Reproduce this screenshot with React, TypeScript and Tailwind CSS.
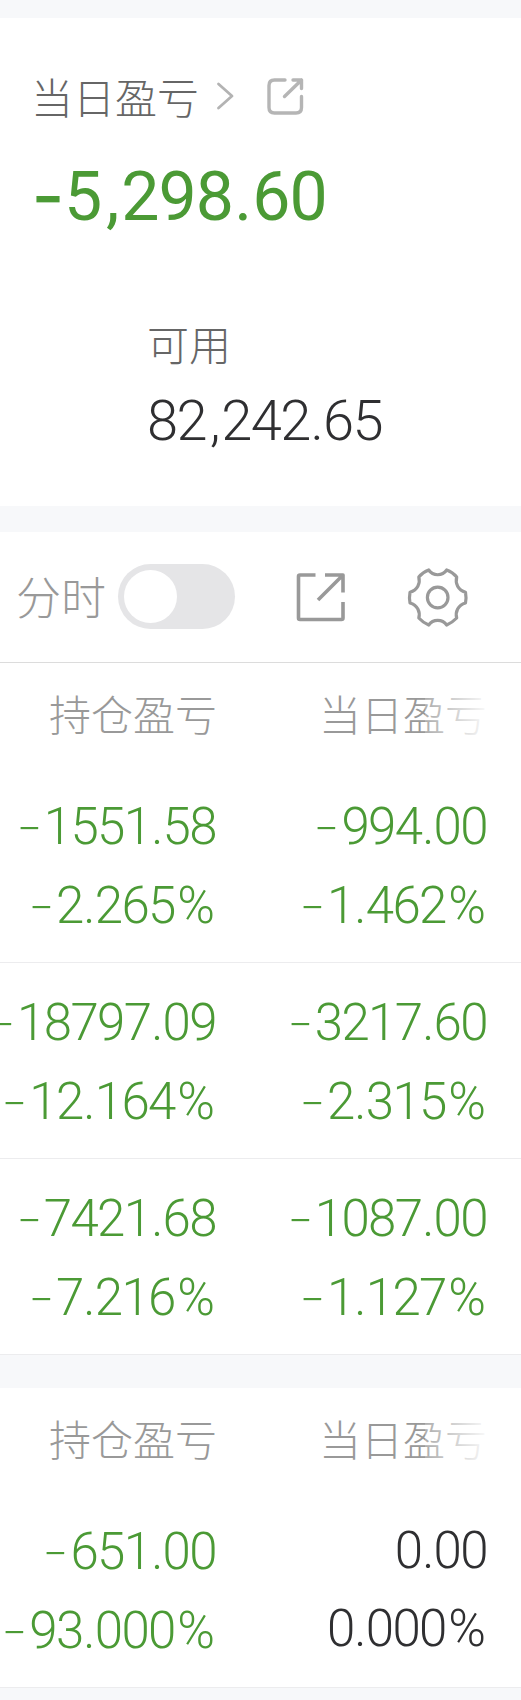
import clsx from 'clsx'

type Cell = { amount: string; percent: string }
type Position = { total: Cell; today: Cell }

const HOLDINGS: Position[] = [
  { total: { amount: '-1551.58', percent: '-2.265%' }, today: { amount: '-994.00', percent: '-1.462%' } },
  { total: { amount: '-18797.09', percent: '-12.164%' }, today: { amount: '-3217.60', percent: '-2.315%' } },
  { total: { amount: '-7421.68', percent: '-7.216%' }, today: { amount: '-1087.00', percent: '-1.127%' } },
]

const OTHERS: Position[] = [
  { total: { amount: '-651.00', percent: '-93.000%' }, today: { amount: '0.00', percent: '0.000%' } },
]

const SIGNS: Record<string, string> = {
  ',': 'ml-[0.07em] mr-[0.04em]',
  '.': 'mx-[0.015em]',
  '%': 'mx-[0.05em]',
}

// the minus sign comes from Inter, it is longer and sits higher than Roboto's
function Num({ value, minus = 'mr-[0.055em] scale-x-120 font-extralight' }: { value: string; minus?: string }) {
  return (
    <span className="font-['Roboto',sans-serif] whitespace-nowrap">
      {value.split(/([-,.%])/).map((part, i) => {
        if (part === '-') return <span key={i} className={clsx("inline-block origin-right font-['Inter',sans-serif]", minus)}>-</span>
        return SIGNS[part] ? <span key={i} className={SIGNS[part]}>{part}</span> : part
      })}
    </span>
  )
}

function CellValue({ cell, className }: { cell: Cell; className: string }) {
  const down = cell.amount.startsWith('-')
  return (
    <div className={clsx('flex flex-col items-end text-[51px] leading-[78px] font-light tracking-[-1.6px]', down ? 'text-[#4b9a35]' : 'text-[#2f2f31]', className)}>
      <Num value={cell.amount} />
      <Num value={cell.percent} />
    </div>
  )
}

function Table({ rows }: { rows: Position[] }) {
  return (
    <section className="bg-white">
      <div className="flex h-[104px] pt-[19px] text-[42px] leading-[62px] font-light text-[#999]">
        <div className="w-[217px] shrink-0 text-right">持仓盈亏</div>
        <div className="relative w-[270px] shrink-0 text-right">
          当日盈亏
          <div className="absolute inset-y-0 right-0 w-[62px] bg-linear-to-r from-white/20 to-white/95"></div>
        </div>
      </div>
      {rows.map((row) => (
        <div key={row.total.amount} className="flex h-[196px] border-b border-[#ececee] pt-[20px]">
          <CellValue cell={row.total} className="w-[216px] shrink-0" />
          <CellValue cell={row.today} className="w-[271px] shrink-0" />
        </div>
      ))}
    </section>
  )
}

export default function App() {
  return (
    <div className="h-[1700px] w-[521px] overflow-hidden bg-[#f7f8fa] pt-[18px] font-['Noto_Sans_CJK_SC',sans-serif]">
      {/* summary */}
      <section className="h-[488px] bg-white pt-[47px]">
        <div className="flex h-[62px] items-center pl-[31px]">
          <span className="text-[42px] leading-[62px] font-light text-[#666]">当日盈亏</span>
          <svg className="ml-[16px]" width="20" height="30" viewBox="0 0 20 30" fill="none" stroke="#b3b3b3" strokeWidth="2.8" strokeLinecap="round" strokeLinejoin="round">
            <path d="M3.500 3L17 15L3.500 27" />
          </svg>
          <svg className="ml-[30px]" width="40" height="40" viewBox="0 0 40 40" fill="none" stroke="#b5b5b5" strokeWidth="3.4" strokeLinecap="round" strokeLinejoin="round">
            <path d="M20 4H9.500Q4 4 4 9.500V31.500Q4 37 9.500 37H31Q36.500 37 36.500 31.500V20.500" />
            <path d="M28 4H36.500V12.500M36.500 4L19.500 20.500" />
          </svg>
        </div>
        <p className="mt-[24px] h-[80px] pl-[33px] text-[68px] leading-[80px] font-[450] tracking-[-0.9px] text-[#4b9a35]">
          <Num value="-5,298.60" minus="mr-[0.005em] scale-x-105" />
        </p>
        <div className="mt-[81px] pl-[147px]">
          <p className="text-[42px] leading-[62px] font-light text-[#666]">可用</p>
          <p className="mt-[7px] text-[56px] leading-[70px] font-light tracking-[-1.6px] text-[#2f2f31]">
            <Num value="82,242.65" />
          </p>
        </div>
      </section>

      {/* toolbar */}
      <div className="mt-[26px] flex h-[131px] items-center border-b border-[#dcdcdc] bg-white pl-[16px]">
        <span className="mb-[2px] w-[102px] text-[45px] leading-[66px] font-light whitespace-nowrap text-[#999]">分时</span>
        <button className="mb-px flex h-[65px] w-[117px] items-center rounded-full bg-[#e5e5e7] pl-[6px]">
          <span className="size-[53px] rounded-full bg-white"></span>
        </button>
        <svg className="mb-px ml-[60px]" width="52" height="52" viewBox="0 0 52 52" fill="none" stroke="#999" strokeWidth="3.6" strokeLinejoin="round">
          <path d="M20.500 4H5Q3.500 4 3.500 5.500V47Q3.500 48.500 5 48.500H46.500Q48 48.500 48 47V31" />
          <path d="M30 4H48V21.500M48 4L23 29" />
        </svg>
        <svg className="mb-px ml-[58px]" width="64" height="64" viewBox="0 0 64 64" fill="none" stroke="#999" strokeWidth="3.2" strokeLinejoin="round">
          <path d="M23.7 5C28 11.3 37.4 11.3 41.7 5Q47.5 7 51.7 12C50 18.5 53 25 60.5 27.2Q61.5 32.5 60.5 38C53 40 50 47 51.7 53Q47 57.8 41.7 60C37.4 53.8 28 53.8 23.7 60Q18.2 57.8 13.8 53C15.5 47 12.5 40 5 38Q4 32.5 5 27.2C12.5 25 15.5 18.5 13.8 12Q18 7 23.7 5Z" />
          <circle cx="32.700" cy="32.500" r="10.300" />
        </svg>
      </div>

      <Table rows={HOLDINGS} />
      <div className="h-[33px]"></div>
      <Table rows={OTHERS} />
    </div>
  )
}
